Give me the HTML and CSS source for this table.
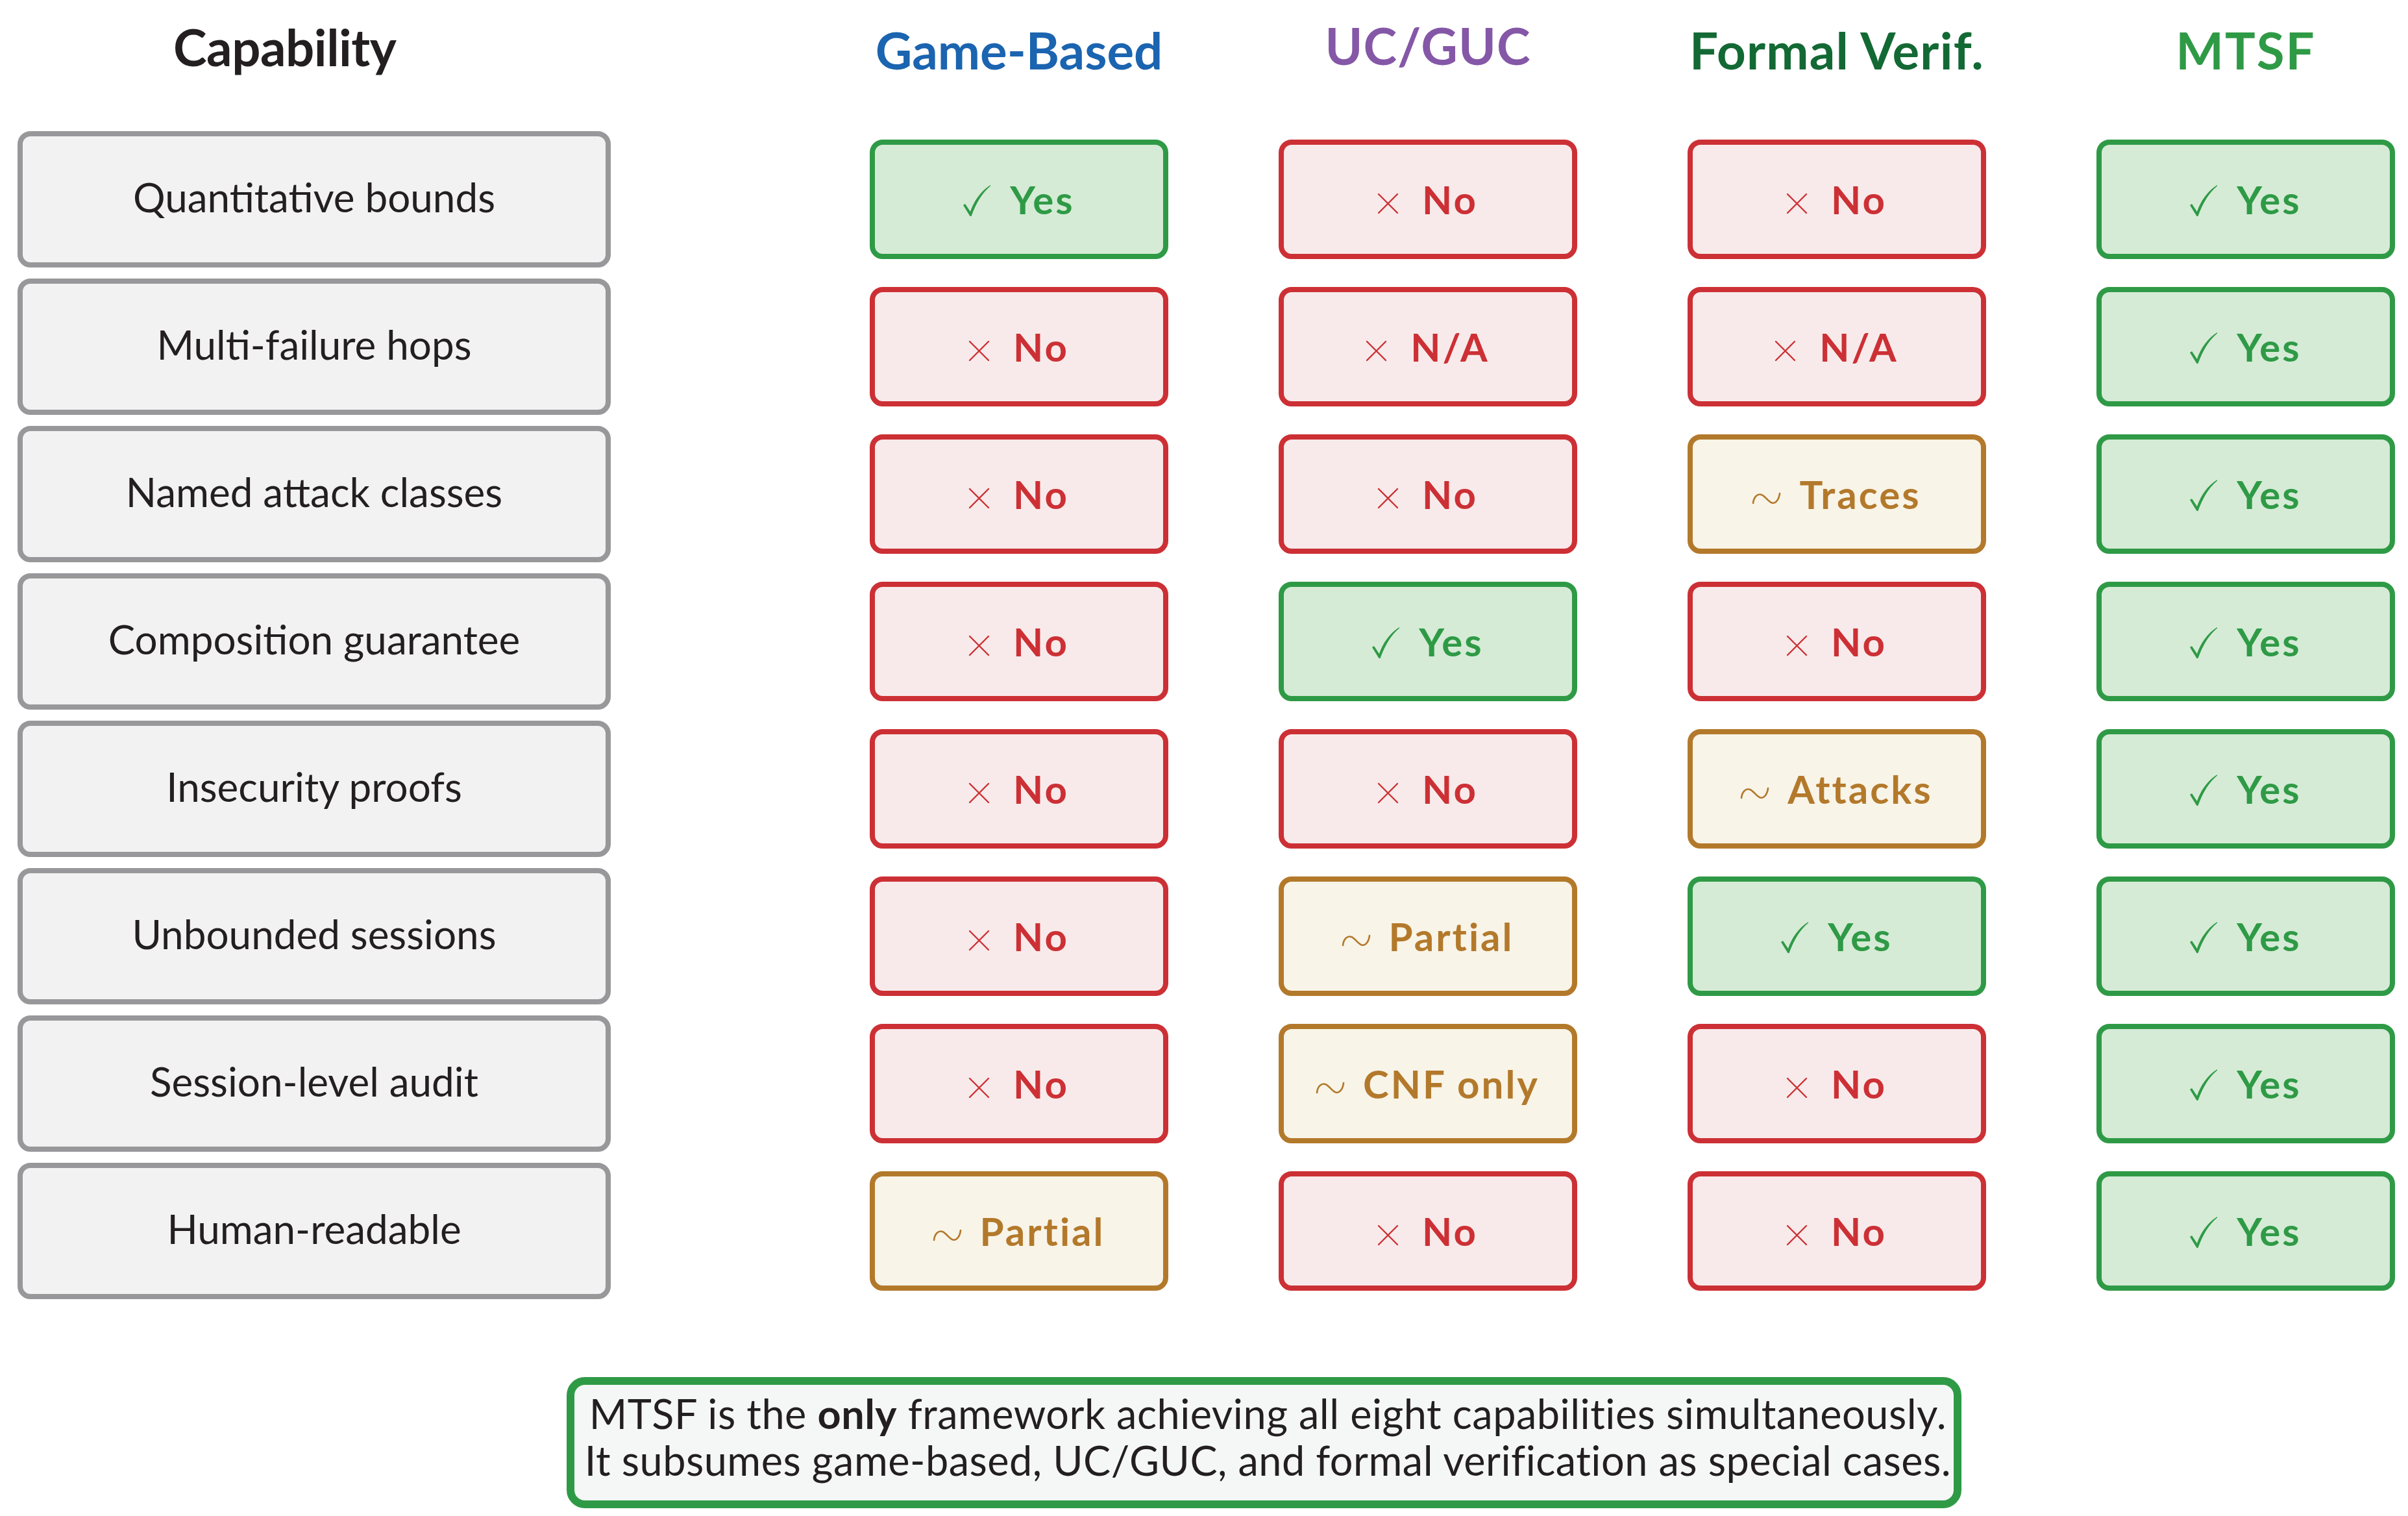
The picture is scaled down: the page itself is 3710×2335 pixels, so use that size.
FILE: index.html
```html
<!DOCTYPE html>
<html lang="en">
<head>
<meta charset="utf-8">
<title>Capability comparison</title>
<link rel="stylesheet" href="styles.css">
</head>
<body>
<div class="page">
  <div class="matrix">
    <div class="hdr hdr-cap">Capability</div>
    <div class="hdr hdr-game">Game-Based</div>
    <div class="hdr hdr-uc">UC/GUC</div>
    <div class="hdr hdr-formal">Formal Verif.</div>
    <div class="hdr hdr-mtsf">MTSF</div>

    <div class="label">Quantitative bounds</div>
    <div class="cell yes"><span class="v"><svg class="ic ic-check" viewBox="0 0 42 48"><path d="M0,31 L3,29 L11,41 C16,26 26,10 42,0 L42,1.4 C30,11 20,27 12.5,48 L10.5,48 Z"/></svg>Yes</span></div>
    <div class="cell no"><span class="v"><svg class="ic ic-cross" viewBox="0 0 31 31"><path d="M1,1 L30,30 M30,1 L1,30"/></svg>No</span></div>
    <div class="cell no"><span class="v"><svg class="ic ic-cross" viewBox="0 0 31 31"><path d="M1,1 L30,30 M30,1 L1,30"/></svg>No</span></div>
    <div class="cell yes"><span class="v"><svg class="ic ic-check" viewBox="0 0 42 48"><path d="M0,31 L3,29 L11,41 C16,26 26,10 42,0 L42,1.4 C30,11 20,27 12.5,48 L10.5,48 Z"/></svg>Yes</span></div>

    <div class="label">Multi-failure hops</div>
    <div class="cell no"><span class="v"><svg class="ic ic-cross" viewBox="0 0 31 31"><path d="M1,1 L30,30 M30,1 L1,30"/></svg>No</span></div>
    <div class="cell no"><span class="v"><svg class="ic ic-cross" viewBox="0 0 31 31"><path d="M1,1 L30,30 M30,1 L1,30"/></svg>N/A</span></div>
    <div class="cell no"><span class="v"><svg class="ic ic-cross" viewBox="0 0 31 31"><path d="M1,1 L30,30 M30,1 L1,30"/></svg>N/A</span></div>
    <div class="cell yes"><span class="v"><svg class="ic ic-check" viewBox="0 0 42 48"><path d="M0,31 L3,29 L11,41 C16,26 26,10 42,0 L42,1.4 C30,11 20,27 12.5,48 L10.5,48 Z"/></svg>Yes</span></div>

    <div class="label">Named attack classes</div>
    <div class="cell no"><span class="v"><svg class="ic ic-cross" viewBox="0 0 31 31"><path d="M1,1 L30,30 M30,1 L1,30"/></svg>No</span></div>
    <div class="cell no"><span class="v"><svg class="ic ic-cross" viewBox="0 0 31 31"><path d="M1,1 L30,30 M30,1 L1,30"/></svg>No</span></div>
    <div class="cell part"><span class="v"><svg class="ic ic-tilde" viewBox="0 0 43 17"><path d="M1,16 C2,6 8,1 14,3 C20,5 24,14 30,15.5 C36,17 41,10 42,1"/></svg>Traces</span></div>
    <div class="cell yes"><span class="v"><svg class="ic ic-check" viewBox="0 0 42 48"><path d="M0,31 L3,29 L11,41 C16,26 26,10 42,0 L42,1.4 C30,11 20,27 12.5,48 L10.5,48 Z"/></svg>Yes</span></div>

    <div class="label">Composition guarantee</div>
    <div class="cell no"><span class="v"><svg class="ic ic-cross" viewBox="0 0 31 31"><path d="M1,1 L30,30 M30,1 L1,30"/></svg>No</span></div>
    <div class="cell yes"><span class="v"><svg class="ic ic-check" viewBox="0 0 42 48"><path d="M0,31 L3,29 L11,41 C16,26 26,10 42,0 L42,1.4 C30,11 20,27 12.5,48 L10.5,48 Z"/></svg>Yes</span></div>
    <div class="cell no"><span class="v"><svg class="ic ic-cross" viewBox="0 0 31 31"><path d="M1,1 L30,30 M30,1 L1,30"/></svg>No</span></div>
    <div class="cell yes"><span class="v"><svg class="ic ic-check" viewBox="0 0 42 48"><path d="M0,31 L3,29 L11,41 C16,26 26,10 42,0 L42,1.4 C30,11 20,27 12.5,48 L10.5,48 Z"/></svg>Yes</span></div>

    <div class="label">Insecurity proofs</div>
    <div class="cell no"><span class="v"><svg class="ic ic-cross" viewBox="0 0 31 31"><path d="M1,1 L30,30 M30,1 L1,30"/></svg>No</span></div>
    <div class="cell no"><span class="v"><svg class="ic ic-cross" viewBox="0 0 31 31"><path d="M1,1 L30,30 M30,1 L1,30"/></svg>No</span></div>
    <div class="cell part"><span class="v"><svg class="ic ic-tilde" viewBox="0 0 43 17"><path d="M1,16 C2,6 8,1 14,3 C20,5 24,14 30,15.5 C36,17 41,10 42,1"/></svg>Attacks</span></div>
    <div class="cell yes"><span class="v"><svg class="ic ic-check" viewBox="0 0 42 48"><path d="M0,31 L3,29 L11,41 C16,26 26,10 42,0 L42,1.4 C30,11 20,27 12.5,48 L10.5,48 Z"/></svg>Yes</span></div>

    <div class="label">Unbounded sessions</div>
    <div class="cell no"><span class="v"><svg class="ic ic-cross" viewBox="0 0 31 31"><path d="M1,1 L30,30 M30,1 L1,30"/></svg>No</span></div>
    <div class="cell part"><span class="v"><svg class="ic ic-tilde" viewBox="0 0 43 17"><path d="M1,16 C2,6 8,1 14,3 C20,5 24,14 30,15.5 C36,17 41,10 42,1"/></svg>Partial</span></div>
    <div class="cell yes"><span class="v"><svg class="ic ic-check" viewBox="0 0 42 48"><path d="M0,31 L3,29 L11,41 C16,26 26,10 42,0 L42,1.4 C30,11 20,27 12.5,48 L10.5,48 Z"/></svg>Yes</span></div>
    <div class="cell yes"><span class="v"><svg class="ic ic-check" viewBox="0 0 42 48"><path d="M0,31 L3,29 L11,41 C16,26 26,10 42,0 L42,1.4 C30,11 20,27 12.5,48 L10.5,48 Z"/></svg>Yes</span></div>

    <div class="label">Session-level audit</div>
    <div class="cell no"><span class="v"><svg class="ic ic-cross" viewBox="0 0 31 31"><path d="M1,1 L30,30 M30,1 L1,30"/></svg>No</span></div>
    <div class="cell part"><span class="v"><svg class="ic ic-tilde" viewBox="0 0 43 17"><path d="M1,16 C2,6 8,1 14,3 C20,5 24,14 30,15.5 C36,17 41,10 42,1"/></svg>CNF only</span></div>
    <div class="cell no"><span class="v"><svg class="ic ic-cross" viewBox="0 0 31 31"><path d="M1,1 L30,30 M30,1 L1,30"/></svg>No</span></div>
    <div class="cell yes"><span class="v"><svg class="ic ic-check" viewBox="0 0 42 48"><path d="M0,31 L3,29 L11,41 C16,26 26,10 42,0 L42,1.4 C30,11 20,27 12.5,48 L10.5,48 Z"/></svg>Yes</span></div>

    <div class="label">Human-readable</div>
    <div class="cell part"><span class="v"><svg class="ic ic-tilde" viewBox="0 0 43 17"><path d="M1,16 C2,6 8,1 14,3 C20,5 24,14 30,15.5 C36,17 41,10 42,1"/></svg>Partial</span></div>
    <div class="cell no"><span class="v"><svg class="ic ic-cross" viewBox="0 0 31 31"><path d="M1,1 L30,30 M30,1 L1,30"/></svg>No</span></div>
    <div class="cell no"><span class="v"><svg class="ic ic-cross" viewBox="0 0 31 31"><path d="M1,1 L30,30 M30,1 L1,30"/></svg>No</span></div>
    <div class="cell yes"><span class="v"><svg class="ic ic-check" viewBox="0 0 42 48"><path d="M0,31 L3,29 L11,41 C16,26 26,10 42,0 L42,1.4 C30,11 20,27 12.5,48 L10.5,48 Z"/></svg>Yes</span></div>
  </div>

  <div class="summary">
    <p class="summary-line">MTSF is the <b>only</b> framework achieving all eight capabilities simultaneously.</p>
    <p class="summary-line">It subsumes game-based, UC/GUC, and formal verification as special cases.</p>
  </div>
</div>
</body>
</html>
```

FILE: styles.css
```css
* { box-sizing: border-box; }

html, body {
  margin: 0;
  padding: 0;
  background: #ffffff;
}

body {
  width: 3710px;
  height: 2335px;
  overflow: hidden;
  font-family: Lato, "Open Sans", "DejaVu Sans", sans-serif;
  color: #231f20;
}

.page {
  padding-left: 27px;
}

.matrix {
  display: grid;
  grid-template-columns: 1143px repeat(4, 460px);
  grid-template-rows: 185px repeat(8, 210px);
  column-gap: 170px;
  row-gap: 17px;
}

.hdr {
  font-weight: 700;
  font-size: 78px;
  line-height: 80px;
  padding-top: 37px;
  text-align: center;
  white-space: nowrap;
}

.hdr-cap {
  text-align: left;
  padding-left: 240px;
  padding-top: 32px;
  letter-spacing: -0.5px;
  color: #231f20;
}

.hdr-game { color: #1b64b0; }
.hdr-uc { color: #8557a7; padding-top: 30px; letter-spacing: 1px; }
.hdr-formal { color: #136934; letter-spacing: 1.2px; }
.hdr-mtsf { color: #2f9a46; letter-spacing: 2px; }

.label {
  width: 914px;
  border: 8px solid #98989b;
  border-radius: 20px;
  background: #f2f2f2;
  display: flex;
  align-items: center;
  justify-content: center;
  font-size: 62px;
  line-height: 62px;
  padding-bottom: 8px;
  white-space: nowrap;
}

.cell {
  height: 184px;
  align-self: center;
  border: 8px solid;
  border-radius: 20px;
  display: flex;
  align-items: center;
  justify-content: center;
  font-weight: 700;
  font-size: 60px;
  line-height: 60px;
  letter-spacing: 3px;
  white-space: nowrap;
}

.yes {
  border-color: #2f9a46;
  background: #d5ebd6;
  color: #2f9a46;
}

.no {
  border-color: #cc3035;
  background: #f8eaea;
  color: #cc3035;
}

.part {
  border-color: #b3792b;
  background: #f8f4e8;
  color: #b3792b;
}

.v {
  display: block;
}

.ic {
  display: inline-block;
  overflow: visible;
}

.ic-check {
  width: 42px;
  height: 48px;
  vertical-align: -3px;
  margin-right: 30px;
  fill: currentColor;
}

.ic-cross {
  width: 31px;
  height: 31px;
  vertical-align: 1px;
  margin-right: 37px;
  fill: none;
  stroke: currentColor;
  stroke-width: 2.4;
  stroke-linecap: round;
}

.ic-tilde {
  width: 43px;
  height: 17px;
  vertical-align: 8px;
  margin-right: 29px;
  fill: none;
  stroke: currentColor;
  stroke-width: 2.6;
  stroke-linecap: round;
}

.summary {
  margin: 120px 0 0 846px;
  width: 2149px;
  height: 202px;
  border: 12px solid #2f9a46;
  border-radius: 28px;
  background: #f5f7f6;
  font-size: 63px;
  line-height: 72px;
  letter-spacing: 0.5px;
  text-align: center;
  padding-top: 8px;
  padding-left: 12px;
  white-space: nowrap;
}

.summary-line {
  margin: 0;
}

.summary-line b {
  font-weight: 700;
}
```
